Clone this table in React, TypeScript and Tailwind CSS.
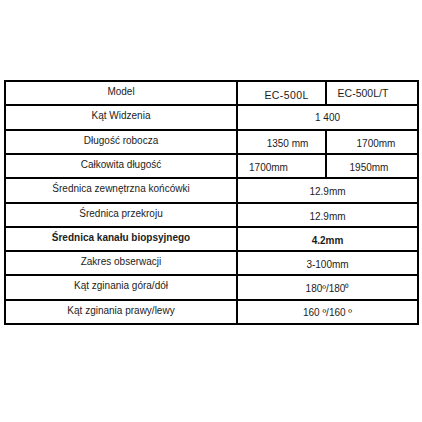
import React from "react"

type Row = {
  label: string
  bold?: boolean
  h: string
  cells: { text: string; span?: number; cls?: string }[]
}

const rows: Row[] = [
  {
    label: "Model",
    h: "h-[24px]",
    cells: [
      { text: "EC-500L", cls: "text-[10.5px] tracking-[0.4px] pt-[5px] pl-[10px]" },
      { text: "EC-500L/T", cls: "text-[10.5px] pr-[18px]" },
    ],
  },
  { label: "Kąt Widzenia", h: "h-[25px]", cells: [{ text: "1 400", span: 2 }] },
  {
    label: "Długość robocza",
    h: "h-[24px]",
    cells: [
      { text: "1350 mm", cls: "pt-[3px] pl-[12px]" },
      { text: "1700mm", cls: "pt-[3px] pl-[8px]" },
    ],
  },
  {
    label: "Całkowita długość",
    h: "h-[24px]",
    cells: [
      { text: "1700mm", cls: "pt-[3px] pr-[26px]" },
      { text: "1950mm", cls: "pt-[3px] pr-[6px]" },
    ],
  },
  { label: "Średnica zewnętrzna końcówki", h: "h-[25px]", cells: [{ text: "12.9mm", span: 2, cls: "pt-[3px]" }] },
  { label: "Średnica przekroju", h: "h-[24px]", cells: [{ text: "12.9mm", span: 2, cls: "pt-[3px]" }] },
  {
    label: "Średnica kanału biopsyjnego",
    bold: true,
    h: "h-[24px]",
    cells: [{ text: "4.2mm", span: 2, cls: "font-bold pt-[3px]" }],
  },
  { label: "Zakres obserwacji", h: "h-[24px]", cells: [{ text: "3-100mm", span: 2, cls: "pt-[3px]" }] },
  { label: "Kąt zginania góra/dół", h: "h-[25px]", cells: [{ text: "180º/180⁰", span: 2, cls: "pt-[3px]" }] },
  { label: "Kąt zginania prawy/lewy", h: "h-[24px]", cells: [{ text: "160 º/160 º", span: 2, cls: "pt-[2px]" }] },
]

export default function App() {
  return (
    <div className="w-[422px] h-[422px] bg-white pt-[80px] pl-[4px] font-['Liberation_Sans',Arial,sans-serif] text-[#1c1c1c]">
      <table className="w-[415px] table-fixed border-collapse border-2 border-black text-[10px] leading-none">
        <colgroup>
          <col className="w-[232px]" />
          <col className="w-[89px]" />
          <col className="w-[92px]" />
        </colgroup>
        <tbody>
          {rows.map((r) => (
            <tr key={r.label} className={r.h}>
              <td
                className={
                  "border-2 border-black text-center align-middle pb-[3px] " +
                  (r.bold ? "font-bold" : "")
                }
              >
                {r.label}
              </td>
              {r.cells.map((c, i) => (
                <td
                  key={i}
                  colSpan={c.span ?? 1}
                  className={"border-2 border-black text-center align-middle " + (c.cls ?? "")}
                >
                  {c.text}
                </td>
              ))}
            </tr>
          ))}
        </tbody>
      </table>
    </div>
  )
}
